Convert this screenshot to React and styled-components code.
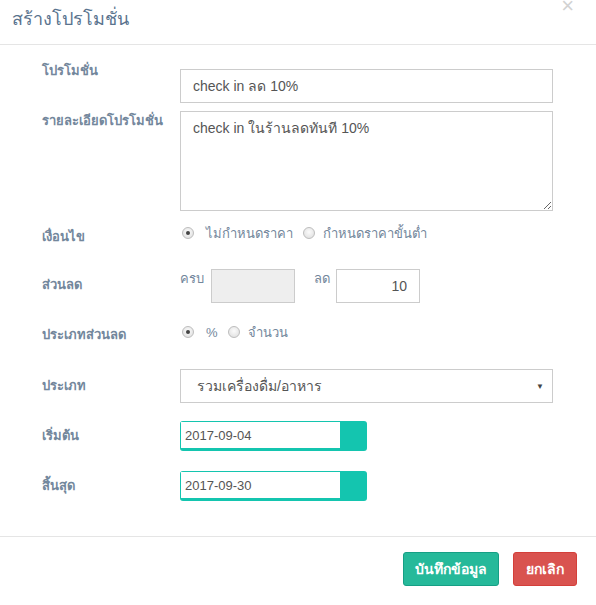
import React from "react";
import styled, { createGlobalStyle } from "styled-components";

const GlobalStyle = createGlobalStyle`
  html, body {
    margin: 0;
    padding: 0;
    background: #fff;
  }
  body {
    font-family: "Liberation Sans", "Noto Sans", sans-serif;
    color: #73879c;
  }
`;

const Modal = styled.div`
  position: relative;
  width: 596px;
  height: 605px;
  background: #fff;
  display: flex;
  flex-direction: column;
`;

const Header = styled.div`
  height: 45px;
  border-bottom: 1px solid #e5e5e5;
  padding: 0 12px;
  display: flex;
  align-items: center;
  box-sizing: border-box;
`;

const Title = styled.h4`
  margin: 0;
  font-size: 18px;
  font-weight: normal;
  color: #5a738e;
  line-height: 24px;
  padding-bottom: 6px;
`;

const Close = styled.span`
  position: absolute;
  top: -5px;
  right: 22px;
  font-size: 22px;
  color: #d2d2d2;
  line-height: 22px;
`;

const Body = styled.div`
  flex: 1;
  padding: 24px 0 0 42px;
  display: flex;
  flex-direction: column;
`;

const Row = styled.div`
  display: flex;
  align-items: flex-start;
  margin-top: ${(p) => p.$gap}px;
`;

const Label = styled.label`
  width: 138px;
  flex: none;
  font-size: 13px;
  font-weight: bold;
  line-height: 20px;
  color: #73879c;
  margin: ${(p) => p.$dy || 0}px 0 ${(p) => -(p.$dy || 0)}px;
`;

const Input = styled.input`
  box-sizing: border-box;
  width: ${(p) => p.$w || 373}px;
  height: 34px;
  border: 1px solid #ccc;
  padding: 0 12px;
  font-family: inherit;
  font-size: 14px;
  color: #555;
  background: ${(p) => (p.disabled ? "#eee" : "#fff")};
  text-align: ${(p) => p.$align || "left"};
  outline: none;
`;

const TextArea = styled.textarea`
  box-sizing: border-box;
  width: 373px;
  height: 100px;
  border: 1px solid #ccc;
  padding: 6px 12px;
  font-family: inherit;
  font-size: 14px;
  line-height: 20px;
  color: #555;
  resize: vertical;
  outline: none;
`;

const Radios = styled.div`
  display: flex;
  align-items: center;
  height: 20px;
  font-size: 13px;
  color: #73879c;
`;

const RadioItem = styled.span`
  display: flex;
  align-items: center;
  margin-right: 8px;
`;

const RadioDot = styled.span`
  box-sizing: border-box;
  width: 12px;
  height: 12px;
  border-radius: 50%;
  border: 1px solid #bdbdbd;
  background: radial-gradient(circle at 50% 40%, #fbfbfb, #dcdcdc);
  margin: 0 ${(p) => p.$space}px 0 2px;
  display: flex;
  align-items: center;
  justify-content: center;
  &::after {
    content: "";
    width: 4px;
    height: 4px;
    border-radius: 50%;
    background: ${(p) => (p.$on ? "#444" : "transparent")};
  }
`;

const Inline = styled.div`
  display: flex;
  align-items: flex-start;
`;

const SmallText = styled.span`
  font-size: 13px;
  line-height: 20px;
  color: #73879c;
  width: ${(p) => p.$w}px;
  margin-left: ${(p) => p.$ml || 0}px;
`;

const Select = styled.div`
  box-sizing: border-box;
  width: 373px;
  height: 34px;
  border: 1px solid #ccc;
  padding: 0 8px 0 16px;
  display: flex;
  align-items: center;
  justify-content: space-between;
  font-size: 14px;
  color: #555;
`;

const Caret = styled.span`
  font-size: 8px;
  color: #444;
`;

const DateBox = styled.div`
  box-sizing: border-box;
  width: 187px;
  height: 30px;
  background: #14c5af;
  border-radius: 3px;
  padding: 1px 27px 3px 1px;
  display: flex;
`;

const DateInput = styled.input`
  flex: 1;
  min-width: 0;
  border: none;
  padding: 0 4px;
  font-family: inherit;
  font-size: 13px;
  color: #555;
  background: #fff;
  outline: none;
`;

const Footer = styled.div`
  height: 69px;
  border-top: 1px solid #e5e5e5;
  display: flex;
  justify-content: flex-end;
  align-items: flex-start;
  padding: 15px 19px 0 0;
  gap: 14px;
  box-sizing: border-box;
`;

const Button = styled.button`
  height: 34px;
  padding: 0;
  white-space: nowrap;
  border-radius: 3px;
  border: 1px solid ${(p) => (p.$danger ? "#d43f3a" : "#169f85")};
  background: ${(p) => (p.$danger ? "#d9534f" : "#26b99a")};
  color: #fff;
  font-family: inherit;
  font-size: 14px;
  font-weight: bold;
  width: ${(p) => p.$w}px;
`;

const Radio = ({ on, label, space }) => (
  <RadioItem>
    <RadioDot $on={on} $space={space} />
    {label}
  </RadioItem>
);

export default function App() {
  return (
    <>
      <GlobalStyle />
      <Modal>
        <Header>
          <Title>สร้างโปรโมชั่น</Title>
        </Header>
        <Close>×</Close>
        <Body>
          <Row $gap={0}>
            <Label $dy={-8}>โปรโมชั่น</Label>
            <Input defaultValue="check in ลด 10%" />
          </Row>
          <Row $gap={8}>
            <Label>รายละเอียดโปรโมชั่น</Label>
            <TextArea defaultValue="check in ในร้านลดทันที 10%" />
          </Row>
          <Row $gap={12}>
            <Label $dy={4}>เงื่อนไข</Label>
            <Radios>
              <Radio on label="ไม่กำหนดราคา" space={12} />
              <Radio label="กำหนดราคาขั้นต่ำ" space={8} />
            </Radios>
          </Row>
          <Row $gap={26}>
            <Label $dy={6}>ส่วนลด</Label>
            <Inline>
              <SmallText $w={31}>ครบ</SmallText>
              <Input $w={84} disabled />
              <SmallText $w={22} $ml={19}>
                ลด
              </SmallText>
              <Input $w={84} $align="right" defaultValue="10" />
            </Inline>
          </Row>
          <Row $gap={19}>
            <Label $dy={3}>ประเภทส่วนลด</Label>
            <Radios>
              <Radio on label="%" space={12} />
              <Radio label="จำนวน" space={8} />
            </Radios>
          </Row>
          <Row $gap={27}>
            <Label $dy={7}>ประเภท</Label>
            <Select>
              <span>รวมเครื่องดื่ม/อาหาร</span>
              <Caret>▼</Caret>
            </Select>
          </Row>
          <Row $gap={18}>
            <Label $dy={5}>เริ่มต้น</Label>
            <DateBox>
              <DateInput defaultValue="2017-09-04" />
            </DateBox>
          </Row>
          <Row $gap={20}>
            <Label $dy={5}>สิ้นสุด</Label>
            <DateBox>
              <DateInput defaultValue="2017-09-30" />
            </DateBox>
          </Row>
        </Body>
        <Footer>
          <Button $w={96}>บันทึกข้อมูล</Button>
          <Button $w={64} $danger>
            ยกเลิก
          </Button>
        </Footer>
      </Modal>
    </>
  );
}
